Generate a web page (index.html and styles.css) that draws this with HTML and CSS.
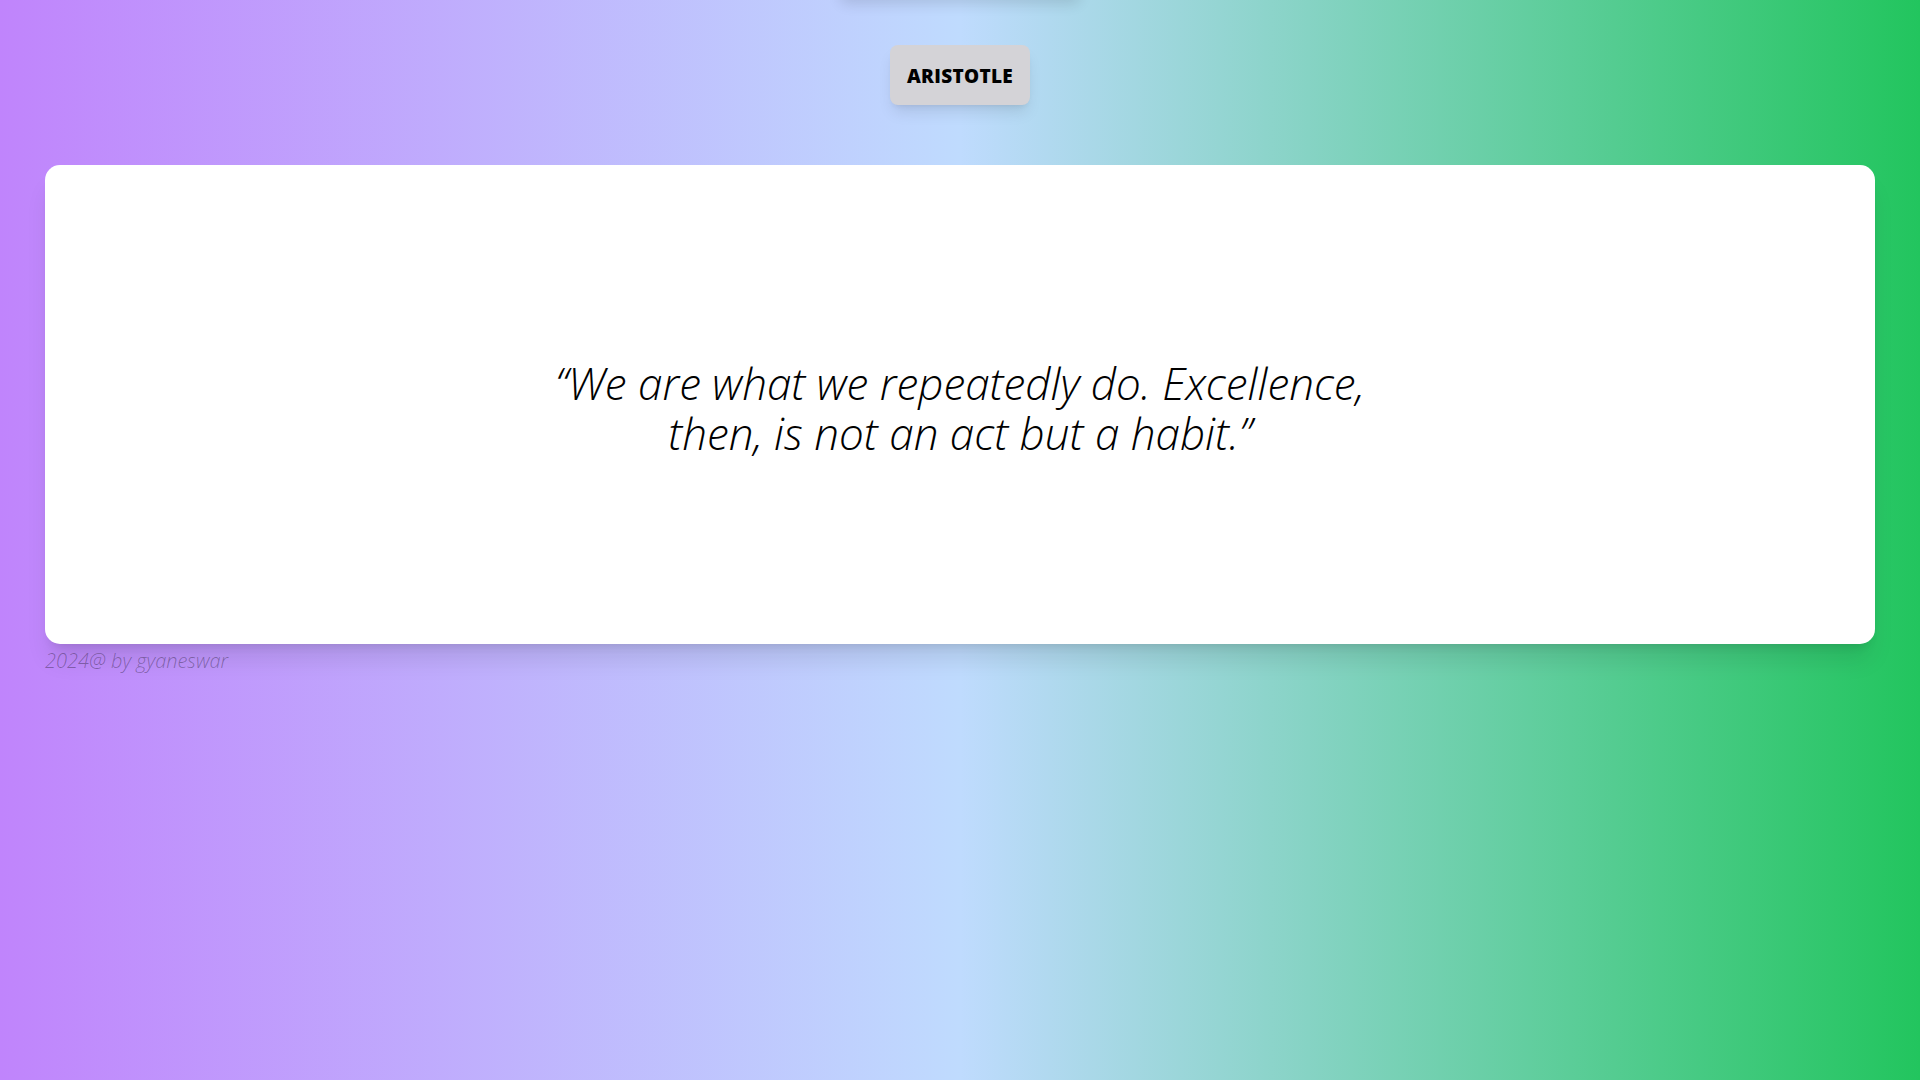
FILE: index.html
```html
<!DOCTYPE html>
<html lang="en">
<head>
<meta charset="utf-8">
<title>Quote</title>
<link rel="stylesheet" href="styles.css">
</head>
<body>
<div class="top-shade"></div>
<main class="page">
  <header class="head">
    <button class="author">ARISTOTLE</button>
  </header>
  <section class="card">
    <p class="quote">“We are what we repeatedly do. Excellence,<br>then, is not an act but a habit.”</p>
  </section>
  <footer class="foot">2024@ by gyaneswar</footer>
</main>
</body>
</html>
```
FILE: styles.css
```css
html, body {
  margin: 0;
  padding: 0;
}
body {
  min-height: 100vh;
  background: linear-gradient(to right, #c084fc 0%, #bfdbfe 50%, #22c55e 100%);
  font-family: "Open Sans", "Noto Sans", sans-serif;
  position: relative;
  overflow: hidden;
}
.top-shade {
  position: absolute;
  left: 840px;
  top: -40px;
  width: 240px;
  height: 40px;
  border-radius: 8px;
  box-shadow: 0 4px 14px rgba(0, 0, 0, 0.12);
}
.page {
  padding: 45px 45px 0;
  display: flex;
  flex-direction: column;
}
.head {
  display: flex;
  justify-content: center;
}
.author {
  width: 140px;
  height: 60px;
  border: none;
  border-radius: 8px;
  background: #d4d3d7;
  color: #000;
  font-family: "Open Sans", "Noto Sans", sans-serif;
  font-weight: 800;
  font-size: 19px;
  letter-spacing: 0.3px;
  padding: 2px 0 0;
  box-shadow: 0 10px 15px -3px rgba(0, 0, 0, 0.1), 0 4px 6px -4px rgba(0, 0, 0, 0.1);
  cursor: pointer;
}
.card {
  margin-top: 60px;
  height: 479px;
  background: #fff;
  border-radius: 15px;
  box-shadow: 0 20px 25px -5px rgba(0, 0, 0, 0.1), 0 8px 10px -6px rgba(0, 0, 0, 0.1);
  display: flex;
  align-items: center;
  justify-content: center;
}
.quote {
  margin: 6px 0 0;
  text-align: center;
  font-style: italic;
  font-weight: 300;
  font-size: 44px;
  line-height: 50px;
  color: #000;
}
.foot {
  margin-top: 5px;
  font-style: italic;
  font-weight: 300;
  font-size: 20px;
  line-height: 24px;
  color: rgba(0, 0, 0, 0.32);
}
```
